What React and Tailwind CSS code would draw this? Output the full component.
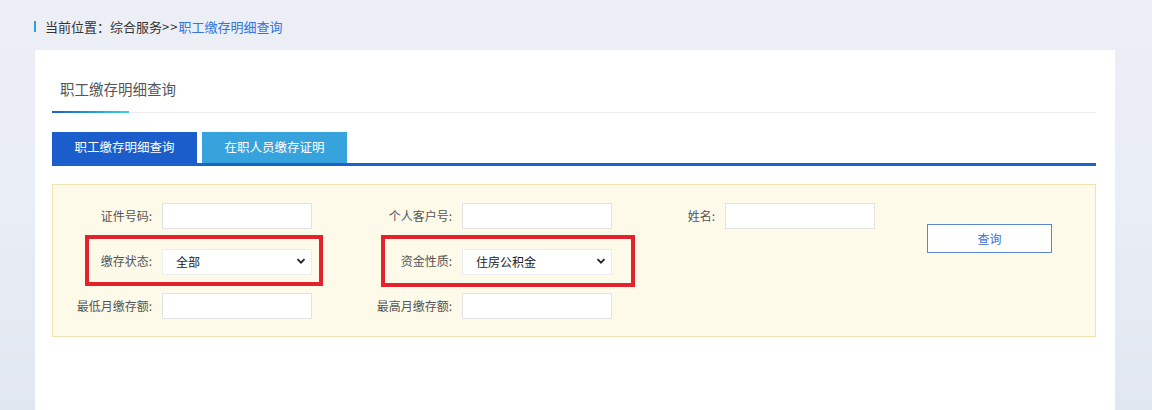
import React, { useState } from "react";

const FONT = {
  fontFamily: '"Microsoft YaHei", "Noto Sans CJK SC", "Noto Sans", sans-serif',
};

const Chevron = () => (
  <svg
    width="10"
    height="10"
    viewBox="0 0 10 10"
    className="pointer-events-none absolute right-[6px] top-1/2 -translate-y-1/2"
  >
    <path d="M1.5 3.2 L5 6.7 L8.5 3.2" fill="none" stroke="#222" strokeWidth="1.8" />
  </svg>
);

const Field = ({ label, labelW, width, children, marked }) => (
  <div className={`relative flex items-center ${width}`}>
    <label className={`shrink-0 pr-[10px] text-right text-[12px] text-[#555] ${labelW}`}>
      {label}
    </label>
    {children}
    {marked}
  </div>
);

const TextInput = ({ name, value, onChange }) => (
  <input
    type="text"
    name={name}
    value={value}
    onChange={onChange}
    className="h-[26px] w-[150px] border border-[#e3e3e3] bg-white px-2 text-[12px] text-[#333] outline-none"
  />
);

const Select = ({ name, value, onChange, options }) => (
  <div className="relative h-[26px] w-[150px]">
    <select
      name={name}
      value={value}
      onChange={onChange}
      className="h-full w-full appearance-none border border-[#ececec] bg-white pl-[13px] text-[12px] text-[#222] outline-none"
    >
      {options.map((o) => (
        <option key={o}>{o}</option>
      ))}
    </select>
    <Chevron />
  </div>
);

const App = () => {
  const [tab, setTab] = useState(0);
  const [form, setForm] = useState({
    idNo: "",
    custNo: "",
    name: "",
    status: "全部",
    fund: "住房公积金",
    minAmt: "",
    maxAmt: "",
  });

  const handleChange = (e) => {
    const { name, value } = e.target;
    setForm({ ...form, [name]: value });
  };

  return (
    <div
      className="min-h-[410px] w-full bg-gradient-to-b from-[#eceff5] via-[#e9edf4] to-[#e1e7f1]"
      style={FONT}
    >
      {/* breadcrumb */}
      <div className="flex h-[50px] items-start pl-[34px] pt-[20px]">
        <span className="mt-[1px] h-[11px] w-[2px] bg-[#2aa0e0]" />
        <span className="ml-[9px] text-[13px] leading-[14px] text-[#333]">
          当前位置：综合服务
          <span className="tracking-[1px]">&gt;&gt;</span>
          <span className="text-[#3474db]">职工缴存明细查询</span>
        </span>
      </div>

      {/* panel */}
      <div className="ml-[35px] h-[360px] w-[1080px] bg-white pl-[17px] pr-[19px]">
        <div className="pl-[8px] pt-[28px] text-[14.5px] leading-[22px] text-[#555]">
          职工缴存明细查询
        </div>
        <div className="relative mt-[11px] h-[2px]">
          <div className="absolute left-0 right-0 top-[1px] h-px bg-[#ececec]" />
          <div className="absolute left-0 top-0 h-[2px] w-[77px] bg-gradient-to-r from-[#1f5fcc] to-[#3fd3d3]" />
        </div>

        {/* tabs */}
        <div className="mt-[19px] flex gap-[5px] border-b-[3px] border-[#1d62c9]">
          {["职工缴存明细查询", "在职人员缴存证明"].map((t, i) => (
            <button
              key={t}
              onClick={() => setTab(i)}
              className={`h-[31px] w-[145px] text-[12.5px] text-white ${
                i === 0 ? "bg-[#1a5dcb]" : "bg-[#36a3dc]"
              }`}
            >
              {t}
            </button>
          ))}
        </div>

        {/* query form */}
        <div className="mt-[18px] flex h-[153px] border border-[#f1e2b0] bg-[#fdfaea] pt-[18px]">
          <div className="flex flex-col gap-[19px]">
            <div className="flex">
              <Field label="证件号码:" labelW="w-[109px]" width="w-[259px]">
                <TextInput name="idNo" value={form.idNo} onChange={handleChange} />
              </Field>
              <Field label="个人客户号:" labelW="w-[150px]" width="w-[300px]">
                <TextInput name="custNo" value={form.custNo} onChange={handleChange} />
              </Field>
              <Field label="姓名:" labelW="w-[113px]" width="w-[263px]">
                <TextInput name="name" value={form.name} onChange={handleChange} />
              </Field>
            </div>
            <div className="flex">
              <Field
                label="缴存状态:"
                labelW="w-[109px]"
                width="w-[259px]"
                marked={
                  <span className="pointer-events-none absolute -bottom-[12px] -right-[11px] -top-[13px] left-[32px] border-4 border-[#e3222b]" />
                }
              >
                <Select
                  name="status"
                  value={form.status}
                  onChange={handleChange}
                  options={["全部", "正常", "封存"]}
                />
              </Field>
              <Field
                label="资金性质:"
                labelW="w-[150px]"
                width="w-[300px]"
                marked={
                  <span className="pointer-events-none absolute -bottom-[13px] -right-[23px] -top-[13px] left-[69px] border-4 border-[#e3222b]" />
                }
              >
                <Select
                  name="fund"
                  value={form.fund}
                  onChange={handleChange}
                  options={["住房公积金", "补充公积金"]}
                />
              </Field>
            </div>
            <div className="flex">
              <Field label="最低月缴存额:" labelW="w-[109px]" width="w-[259px]">
                <TextInput name="minAmt" value={form.minAmt} onChange={handleChange} />
              </Field>
              <Field label="最高月缴存额:" labelW="w-[150px]" width="w-[300px]">
                <TextInput name="maxAmt" value={form.maxAmt} onChange={handleChange} />
              </Field>
            </div>
          </div>
          <div className="ml-[52px] pt-[21px]">
            <button
              onClick={() => console.log(tab, form)}
              className="h-[29px] w-[125px] border border-[#5b86d4] bg-white text-[12px] text-[#3a6fd0]"
            >
              查询
            </button>
          </div>
        </div>
      </div>
    </div>
  );
};

export default App;
